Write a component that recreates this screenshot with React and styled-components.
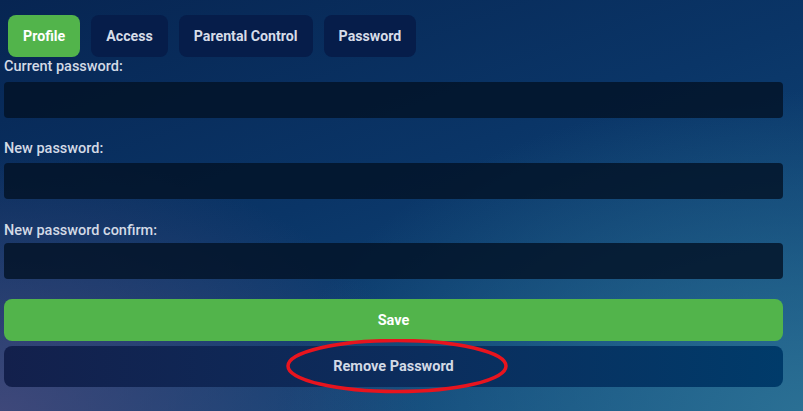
import React from "react";
import styled, { createGlobalStyle } from "styled-components";

const Global = createGlobalStyle`
  html, body { margin: 0; padding: 0; }
  body {
    width: 803px;
    height: 411px;
    overflow: hidden;
    font-family: Roboto, "Liberation Sans", sans-serif;
    background:
      radial-gradient(ellipse 420px 260px at 0% 100%, rgba(75,75,125,0.8), rgba(75,75,125,0) 100%),
      radial-gradient(ellipse 520px 320px at 100% 100%, rgba(45,115,150,0.9), rgba(45,115,150,0) 100%),
      linear-gradient(160deg, #072552 0%, #0a3567 45%, #134f82 100%);
  }
`;

const Page = styled.div`
  width: 803px;
  height: 411px;
  box-sizing: border-box;
  padding: 15px 20px 0 4px;
  display: flex;
  flex-direction: column;
`;

const Tabs = styled.div`
  display: flex;
  gap: 11px;
  padding-left: 4px;
`;

const Tab = styled.button`
  height: 42px;
  padding: 0 15px;
  border: none;
  border-radius: 8px;
  font-family: Roboto, "Liberation Sans", sans-serif;
  font-weight: 700;
  font-size: 14.2px;
  color: ${p => (p.$active ? "#ffffff" : "#d6dce8")};
  background: ${p => (p.$active ? "#52b44b" : "#061d4a")};
`;

const Field = styled.div`
  display: flex;
  flex-direction: column;
  margin-top: ${p => p.$top}px;
`;

const Label = styled.label`
  font-size: 14.5px;
  font-weight: 500;
  color: #d3dae6;
  line-height: 18px;
  height: 18px;
`;

const Input = styled.div`
  margin-top: ${p => p.$gap}px;
  height: 36px;
  border-radius: 4px;
  background: rgba(3, 18, 38, 0.82);
`;

const Button = styled.button`
  position: relative;
  height: ${p => p.$h}px;
  margin-top: ${p => p.$top}px;
  padding: 0;
  border: none;
  border-radius: 8px;
  font-family: Roboto, "Liberation Sans", sans-serif;
  font-weight: 700;
  font-size: 14.5px;
  color: ${p => (p.$primary ? "#ffffff" : "#d3dae6")};
  background: ${p =>
    p.$primary ? "#52b44b" : "linear-gradient(90deg, #13204c 0%, #0c2c5c 50%, #003b6a 100%)"};
`;

const Circle = styled.svg`
  position: absolute;
  left: 281px;
  top: -7px;
  pointer-events: none;
`;

export default function App() {
  return (
    <>
      <Global />
      <Page>
        <Tabs>
          <Tab $active>Profile</Tab>
          <Tab>Access</Tab>
          <Tab>Parental Control</Tab>
          <Tab>Password</Tab>
        </Tabs>
        <Field $top={1}>
          <Label>Current password:</Label>
          <Input $gap={6} />
        </Field>
        <Field $top={22}>
          <Label>New password:</Label>
          <Input $gap={5} />
        </Field>
        <Field $top={23}>
          <Label>New password confirm:</Label>
          <Input $gap={3} />
        </Field>
        <Button $primary $h={42} $top={20}>Save</Button>
        <Button $h={41} $top={5}>
          Remove Password
          <Circle width="226" height="56" viewBox="0 0 226 56">
            <ellipse cx="112" cy="27" rx="109" ry="25.5" fill="none" stroke="#e8141e" strokeWidth="3.5" />
          </Circle>
        </Button>
      </Page>
    </>
  );
}
